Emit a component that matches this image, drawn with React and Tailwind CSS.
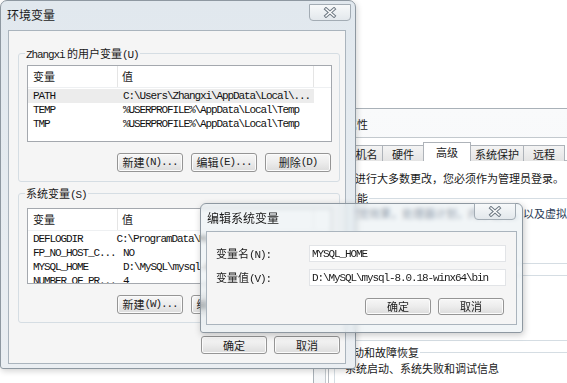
import React from "react";

const mono = "font-['Liberation_Mono',monospace] tracking-[-1.1px]";

const CloseX = () => (
  <svg width="14" height="11" viewBox="0 0 14 11">
    <path d="M3 2 L11 9 M11 2 L3 9" stroke="#6f7a84" strokeWidth="3.4" strokeLinecap="square" />
    <path d="M3 2 L11 9 M11 2 L3 9" stroke="#ffffff" strokeWidth="1.4" strokeLinecap="square" />
  </svg>
);

const CloseBtn = ({ className }) => (
  <div
    className={`w-[42px] h-[17px] flex items-center justify-center rounded-b-[4px] border border-[#a3acb4] bg-linear-to-b from-[#f7f9fa] to-[#e3e8ec] ${className}`}
  >
    <CloseX />
  </div>
);

const Btn = ({ children, className = "" }) => (
  <div
    className={`w-[66px] flex items-center justify-center rounded-[3px] border border-[#959595] bg-linear-to-b from-[#f7f7f7] via-[#ececec] to-[#dcdcdc] shadow-[inset_0_0_0_1px_#fbfbfb] text-[11px] leading-none text-[#222] ${className}`}
  >
    {children}
  </div>
);

const Group = ({ label, className = "", labelBg = "bg-[#f5f5f5]", children }) => (
  <div className={`relative border border-[#d5dde3] rounded-[3px] ${className}`}>
    <span className={`absolute left-[6px] -top-[8px] px-[1px] text-[11px] leading-[14px] ${labelBg}`}>
      {label}
    </span>
    {children}
  </div>
);

const VarList = ({ rows, height, firstSelected }) => (
  <div className={`ml-[8px] w-[305px] border border-[#a4a8ae] bg-white overflow-hidden ${height}`}>
    <div className="flex h-[22px] text-[11px] border-b border-[#eef0f2]">
      <div className="w-[90px] pl-[5px] flex items-center border-r border-[#e5e5e5]">变量</div>
      <div className="w-[196px] pl-[4px] flex items-center border-r border-[#e5e5e5]">值</div>
    </div>
    <div className="pt-[1px]">
      {rows.map(([k, v], i) => (
        <div
          key={k}
          className={`flex h-[14px] items-center text-[11px] leading-none text-[#111] ${mono} ${
            firstSelected && i === 0 ? "bg-[#ececec] w-[286px]" : ""
          }`}
        >
          <div className="w-[90px] pl-[5px] whitespace-nowrap">{k}</div>
          <div className="pl-[5px] whitespace-nowrap">{v}</div>
        </div>
      ))}
    </div>
  </div>
);

const EnvWindow = () => (
  <div className="absolute z-10 left-0 top-0 w-[356px] h-[369px] rounded-t-[7px] rounded-b-[3px] border border-[#8e98a1] bg-linear-to-b from-[#e1e8ee] to-[#eaeef2] shadow-[1px_2px_6px_rgba(0,0,0,0.18)]">
    <div className="h-[29px] flex items-start justify-between pl-[6px] pr-[4px]">
      <span className="mt-[6px] text-[12px] leading-[16px] text-[#1a1a1a]">环境变量</span>
      <CloseBtn className="mt-[3px]" />
    </div>
    <div className="ml-[7px] w-[338px] h-[334px] border border-[#aab4bd] bg-[#f5f5f5] flex flex-col">
      <Group
        className="ml-[9px] mt-[22px] w-[322px] h-[129px]"
        label={
          <>
            <span className={mono}>Zhangxi</span> 的用户变量<span className={mono}>(U)</span>
          </>
        }
      >
        <div className="mt-[11px]">
          <VarList
            height="h-[77px]"
            firstSelected
            rows={[
              ["PATH", "C:\\Users\\Zhangxi\\AppData\\Local\\..."],
              ["TEMP", "%USERPROFILE%\\AppData\\Local\\Temp"],
              ["TMP", "%USERPROFILE%\\AppData\\Local\\Temp"],
            ]}
          />
        </div>
        <div className="mt-[11px] flex justify-end gap-[8px] pr-[8px]">
          <Btn className="h-[19px]">
            新建<span className={mono}>(N)...</span>
          </Btn>
          <Btn className="h-[19px]">
            编辑<span className={mono}>(E)...</span>
          </Btn>
          <Btn className="h-[19px]">
            删除<span className={mono}>(D)</span>
          </Btn>
        </div>
      </Group>

      <Group
        className="ml-[9px] mt-[11px] w-[322px] h-[130px]"
        label={
          <>
            系统变量<span className={mono}>(S)</span>
          </>
        }
      >
        <div className="mt-[14px]">
          <VarList
            height="h-[76px]"
            rows={[
              ["DEFLOGDIR", "C:\\ProgramData\\McAfee\\Endpoint Security"],
              ["FP_NO_HOST_C...", "NO"],
              ["MYSQL_HOME", "D:\\MySQL\\mysql-8.0.18-winx64"],
              ["NUMBER_OF_PR...", "4"],
            ]}
          />
        </div>
        <div className="mt-[11px] flex justify-end gap-[8px] pr-[8px]">
          <Btn className="h-[19px]">
            新建<span className={mono}>(W)...</span>
          </Btn>
          <Btn className="h-[19px]">
            编辑<span className={mono}>(I)...</span>
          </Btn>
          <Btn className="h-[19px]">
            删除<span className={mono}>(L)</span>
          </Btn>
        </div>
      </Group>

      <div className="mt-[13px] flex justify-end gap-[7px] pr-[5px]">
        <Btn className="h-[18px]">确定</Btn>
        <Btn className="h-[18px]">取消</Btn>
      </div>
    </div>
  </div>
);

const Tab = ({ label, w, selected }) => (
  <div
    className={`${w} -ml-[1px] first:ml-0 flex justify-center border border-b-0 border-[#aeb3b9] text-[11px] leading-none ${
      selected
        ? "h-[19px] bg-white pt-[4px]"
        : "h-[16px] bg-linear-to-b from-[#f4f4f4] to-[#e4e4e4] pt-[3px]"
    }`}
  >
    {label}
  </div>
);

const SysPropsWindow = () => (
  <div className="absolute z-0 left-[313px] top-[108px] w-[300px] h-[300px] border border-[#a9b1b8] bg-linear-to-b from-[#f9fafb] to-[#f3f5f7]">
    <div className="h-[28px] pl-[10px] pt-[8px] text-[11px] leading-[14px] text-[#1a1a1a]">系统属性</div>
    <div className="ml-[11px] h-[270px] border-t border-l border-[#c3c9ce] bg-white">
      <div className="mt-[4px] pl-[2px] flex items-end h-[19px] relative z-10">
        <Tab label="计算机名" w="w-[55px]" />
        <Tab label="硬件" w="w-[42px]" />
        <Tab label="高级" w="w-[48px]" selected />
        <Tab label="系统保护" w="w-[54px]" />
        <Tab label="远程" w="w-[42px]" />
      </div>
      <div className="-mt-[1px] ml-[2px] h-[240px] border border-[#b6bbc1] bg-white flex flex-col text-[11px] leading-[14px] text-[#1a1a1a]">
        <p className="mt-[10px] ml-[15px] whitespace-nowrap">要进行大多数更改，您必须作为管理员登录。</p>
        <Group label="性能" labelBg="bg-white" className="mt-[13px] ml-[9px] w-[290px] h-[66px]">
          <p className="mt-[7px] ml-[8px] whitespace-nowrap text-[#2a3a55]">视觉效果，处理器计划，内存使用，以及虚拟内存</p>
        </Group>
        <Group label="用户配置文件" labelBg="bg-white" className="mt-[11px] ml-[9px] w-[290px] h-[66px]">
          <p className="mt-[7px] ml-[8px] whitespace-nowrap">与登录有关的桌面设置</p>
        </Group>
        <Group label="启动和故障恢复" labelBg="bg-white" className="mt-[11px] ml-[5px] w-[294px] h-[40px]">
          <p className="mt-[8px] ml-[10px] whitespace-nowrap">系统启动、系统失败和调试信息</p>
        </Group>
      </div>
    </div>
  </div>
);

const EditDialog = () => (
  <div className="absolute z-20 left-[200px] top-[203px] w-[323px] h-[130px] rounded-t-[6px] rounded-b-[3px] border border-[#8e98a1] bg-[#e6ecf1]/55 backdrop-blur-[2px] shadow-[1px_2px_7px_rgba(0,0,0,0.22)]">
    <div className="h-[27px] flex items-start justify-between pl-[6px] pr-[6px]">
      <span className="mt-[6px] text-[12px] leading-[16px] text-[#1a1a1a]">编辑系统变量</span>
      <CloseBtn className="-mt-[1px] w-[41px] h-[16px]" />
    </div>
    <div className="ml-[5px] w-[311px] h-[94px] border border-[#aab4bd] bg-[#f5f5f5] flex flex-col text-[11px] leading-[14px] text-[#1a1a1a]">
      <div className="mt-[13px] pl-[9px] flex items-center">
        <span className="w-[93px] whitespace-nowrap">
          变量名<span className={mono}>(N):</span>
        </span>
        <div className={`w-[197px] h-[17px] bg-white border border-[#e2e4e7] flex items-center pl-[2px] text-[11px] ${mono}`}>
          MYSQL_HOME
        </div>
      </div>
      <div className="mt-[7px] pl-[9px] flex items-center">
        <span className="w-[93px] whitespace-nowrap">
          变量值<span className={mono}>(V):</span>
        </span>
        <div className={`w-[197px] h-[17px] bg-white border border-[#e2e4e7] flex items-center pl-[2px] text-[11px] whitespace-nowrap ${mono}`}>
          D:\MySQL\mysql-8.0.18-winx64\bin
        </div>
      </div>
      <div className="mt-[12px] flex justify-end gap-[7px] pr-[12px]">
        <Btn className="h-[17px]">确定</Btn>
        <Btn className="h-[17px]">取消</Btn>
      </div>
    </div>
  </div>
);

export default function App() {
  return (
    <div className="relative w-[567px] h-[383px] overflow-hidden bg-white font-['Noto_Sans_CJK_SC',sans-serif] text-[#1a1a1a]">
      <SysPropsWindow />
      <EnvWindow />
      <EditDialog />
    </div>
  );
}
